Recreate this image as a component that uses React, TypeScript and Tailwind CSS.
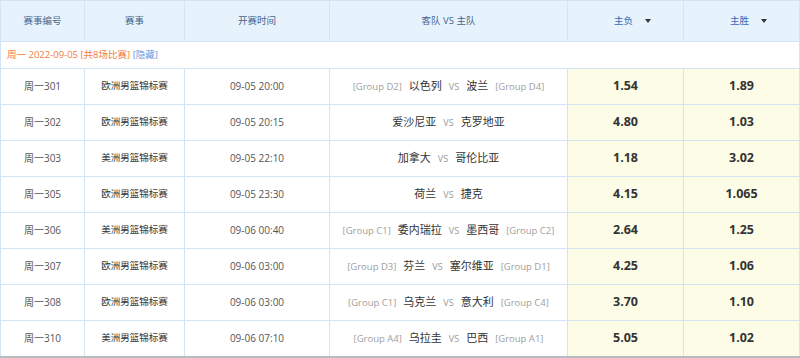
import React from 'react';

interface Match {
  no: string;
  league: string;
  time: string;
  awayGroup?: string;
  away: string;
  home: string;
  homeGroup?: string;
  lose: string;
  win: string;
}

const matches: Match[] = [
  { no: '周一301', league: '欧洲男篮锦标赛', time: '09-05 20:00', awayGroup: '[Group D2]', away: '以色列', home: '波兰', homeGroup: '[Group D4]', lose: '1.54', win: '1.89' },
  { no: '周一302', league: '欧洲男篮锦标赛', time: '09-05 20:15', away: '爱沙尼亚', home: '克罗地亚', lose: '4.80', win: '1.03' },
  { no: '周一303', league: '美洲男篮锦标赛', time: '09-05 22:10', away: '加拿大', home: '哥伦比亚', lose: '1.18', win: '3.02' },
  { no: '周一305', league: '欧洲男篮锦标赛', time: '09-05 23:30', away: '荷兰', home: '捷克', lose: '4.15', win: '1.065' },
  { no: '周一306', league: '美洲男篮锦标赛', time: '09-06 00:40', awayGroup: '[Group C1]', away: '委内瑞拉', home: '墨西哥', homeGroup: '[Group C2]', lose: '2.64', win: '1.25' },
  { no: '周一307', league: '欧洲男篮锦标赛', time: '09-06 03:00', awayGroup: '[Group D3]', away: '芬兰', home: '塞尔维亚', homeGroup: '[Group D1]', lose: '4.25', win: '1.06' },
  { no: '周一308', league: '欧洲男篮锦标赛', time: '09-06 03:00', awayGroup: '[Group C1]', away: '乌克兰', home: '意大利', homeGroup: '[Group C4]', lose: '3.70', win: '1.10' },
  { no: '周一310', league: '美洲男篮锦标赛', time: '09-06 07:10', awayGroup: '[Group A4]', away: '乌拉圭', home: '巴西', homeGroup: '[Group A1]', lose: '5.05', win: '1.02' },
];

const Caret = () => <span className="ml-[12px] inline-block border-x-[3px] border-t-[4px] border-x-transparent border-t-[#333] align-middle" />;

const App: React.FC = () => {
  return (
    <div className="w-[800px] h-[358px] bg-white font-['Open_Sans','Noto_Sans_CJK_SC',sans-serif]">
      <table className="w-[799px] table-fixed border-collapse border-b-2 border-b-[#b8bcc0] text-center">
        <colgroup>
          <col className="w-[84px]" />
          <col className="w-[100px]" />
          <col className="w-[145px]" />
          <col className="w-[238px]" />
          <col className="w-[116px]" />
          <col className="w-[116px]" />
        </colgroup>
        <thead>
          <tr className="h-[41px] bg-[#e6f3fd] text-[9.5px] text-[#46648a]">
            <th className="border border-[#d3e5f4] font-normal">赛事编号</th>
            <th className="border border-[#d3e5f4] font-normal">赛事</th>
            <th className="border border-[#d3e5f4] font-normal">开赛时间</th>
            <th className="border border-[#d3e5f4] font-normal">客队 VS 主队</th>
            <th className="border border-[#d3e5f4] font-normal text-[#3c67b0]"><span className="ml-[14px]">主负</span><Caret /></th>
            <th className="border border-[#d3e5f4] font-normal text-[#3c67b0]"><span className="ml-[14px]">主胜</span><Caret /></th>
          </tr>
        </thead>
        <tbody>
          <tr className="h-[27px]">
            <td colSpan={6} className="border border-[#d3e5f4] pl-[6px] text-left text-[9.5px] text-[#f57c3a]">
              周一 2022-09-05 [共8场比赛] <span className="text-[#6b95dd]">[隐藏]</span>
            </td>
          </tr>
          {matches.map(m => (
            <tr key={m.no} className="h-[36px] text-[10px] text-[#555]">
              <td className="border border-[#d3e5f4]">{m.no}</td>
              <td className="border border-[#d3e5f4] text-[9.5px] text-[#333]">{m.league}</td>
              <td className="border border-[#d3e5f4]">{m.time}</td>
              <td className="border border-[#d3e5f4] whitespace-nowrap">
                {m.awayGroup && <span className="mr-[7px] text-[9.5px] text-[#a0a0a0]">{m.awayGroup}</span>}
                <span className="text-[11px] text-[#333]">{m.away}</span>
                <span className="mx-[7px] text-[9px] text-[#999]">VS</span>
                <span className="text-[11px] text-[#333]">{m.home}</span>
                {m.homeGroup && <span className="ml-[7px] text-[9.5px] text-[#a0a0a0]">{m.homeGroup}</span>}
              </td>
              <td className="border border-[#d3e5f4] bg-[#fdfde7] text-[12.5px] font-bold text-[#333]">{m.lose}</td>
              <td className="border border-[#d3e5f4] bg-[#fdfde7] text-[12.5px] font-bold text-[#333]">{m.win}</td>
            </tr>
          ))}
        </tbody>
      </table>
    </div>
  );
};

export default App;
